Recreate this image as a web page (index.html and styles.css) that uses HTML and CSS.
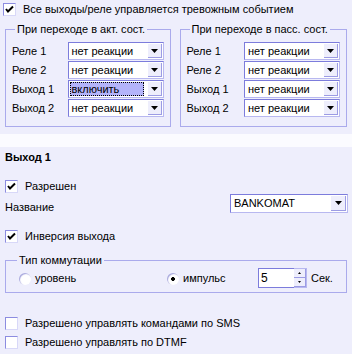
FILE: index.html
```html
<!DOCTYPE html>
<html lang="ru">
<head>
    <meta charset="UTF-8">
    <title>Выход 1</title>
    <link rel="stylesheet" href="styles.css">
</head>
<body>
    <div class="top">
        <div class="check-row first">
            <span class="cb on"></span>Все выходы/реле управляется тревожным событием
        </div>

        <div class="groups">
            <fieldset class="group left">
                <legend>При переходе в акт. сост.</legend>
                <div class="row"><span class="lbl">Реле 1</span><div class="combo"><span class="val">нет реакции</span><span class="btn"></span></div></div>
                <div class="row"><span class="lbl">Реле 2</span><div class="combo"><span class="val">нет реакции</span><span class="btn"></span></div></div>
                <div class="row"><span class="lbl">Выход 1</span><div class="combo"><span class="val focus">включить</span><span class="btn"></span></div></div>
                <div class="row"><span class="lbl">Выход 2</span><div class="combo"><span class="val">нет реакции</span><span class="btn"></span></div></div>
            </fieldset>

            <fieldset class="group right">
                <legend>При переходе в пасс. сост.</legend>
                <div class="row"><span class="lbl">Реле 1</span><div class="combo"><span class="val">нет реакции</span><span class="btn"></span></div></div>
                <div class="row"><span class="lbl">Реле 2</span><div class="combo"><span class="val">нет реакции</span><span class="btn"></span></div></div>
                <div class="row"><span class="lbl">Выход 1</span><div class="combo"><span class="val">нет реакции</span><span class="btn"></span></div></div>
                <div class="row"><span class="lbl">Выход 2</span><div class="combo"><span class="val">нет реакции</span><span class="btn"></span></div></div>
            </fieldset>
        </div>
    </div>

    <div class="divider"></div>

    <div class="details">
        <div class="title">Выход 1</div>

        <div class="check-row allowed"><span class="cb on"></span><span>Разрешен</span></div>

        <div class="name-row">
            <span class="name-label">Название</span>
            <div class="combo wide"><span class="val">BANKOMAT</span><span class="btn"></span></div>
        </div>

        <div class="check-row inverse"><span class="cb on"></span><span>Инверсия выхода</span></div>

        <fieldset class="group switch">
            <legend>Тип коммутации</legend>
            <div class="switch-row">
                <span class="radio-item level"><span class="radio"></span><span>уровень</span></span>
                <span class="radio-item pulse"><span class="radio on"></span><span>импульс</span></span>
                <span class="spin">
                    <span class="spin-val">5</span>
                    <span class="spin-btns"><span class="up"></span><span class="down"></span></span>
                </span>
                <span class="unit">Сек.</span>
            </div>
        </fieldset>

        <div class="check-row sms"><span class="cb"></span><span>Разрешено управлять командами по SMS</span></div>
        <div class="check-row dtmf"><span class="cb"></span><span>Разрешено управлять по DTMF</span></div>
    </div>
</body>
</html>
```

FILE: styles.css
```css
body {
    margin: 0;
    background-color: #eeeefc;
    font-family: 'Liberation Sans', Arial, sans-serif;
    font-size: 11px;
    line-height: 13px;
    font-weight: normal;
    color: #000;
    width: 352px;
    height: 354px;
    overflow: hidden;
}

/* checkboxes */
.check-row {
    display: flex;
    align-items: center;
    height: 13px;
    line-height: 13px;
}

.cb {
    width: 11px;
    height: 11px;
    margin-right: 7px;
    background: #fff;
    border: 1px solid #8c8ce0;
    border-right-color: #d8d8f8;
    border-bottom-color: #d8d8f8;
    flex-shrink: 0;
}

.cb.on {
    background: #fff url("data:image/svg+xml,%3Csvg xmlns='http://www.w3.org/2000/svg' width='11' height='11'%3E%3Cpath d='M2 5 L4 7.5 L9 2.5' fill='none' stroke='black' stroke-width='2'/%3E%3C/svg%3E") no-repeat center;
}

/* top panel */
.top {
    padding: 3px 5px 0 3px;
    height: 131px;
}

.groups {
    display: flex;
    gap: 9px;
    margin-top: 7px;
    padding-left: 2px;
}

.group {
    margin: 0;
    border: 1px solid #aaaaec;
    padding: 6px 6px 8px 6px;
}

.group legend {
    padding: 0 2px;
    margin-left: 3px;
    line-height: 13px;
}

.group.left {
    width: 152px;
}

.group.right {
    width: 154px;
}

.row {
    display: flex;
    align-items: center;
    justify-content: space-between;
    height: 18px;
    margin-bottom: 1px;
}

/* combo boxes */
.combo {
    display: flex;
    width: 94px;
    height: 16px;
    background: #fff;
    border: 1px solid #7c7cdc;
    border-right-color: #b8b8f0;
    border-bottom-color: #b8b8f0;
}

.combo .val {
    flex: 1;
    line-height: 14px;
    padding-left: 2px;
    margin: 1px;
    white-space: nowrap;
}

.combo .val.focus {
    background: #b4b4fa;
    outline: 1px dotted #000;
    outline-offset: -1px;
    margin-right: 3px;
}

.combo .btn {
    width: 14px;
    height: 14px;
    margin: 1px;
    background: #eeeefc url("data:image/svg+xml,%3Csvg xmlns='http://www.w3.org/2000/svg' width='7' height='4'%3E%3Cpath d='M0 0 H7 L3.5 4 Z' fill='black'/%3E%3C/svg%3E") no-repeat center;
    border-right: 1px solid #9c9ce4;
    border-bottom: 1px solid #9c9ce4;
    box-sizing: border-box;
}

/* divider strip */
.divider {
    height: 13px;
    background: #fbfbff;
}

/* details */
.details {
    padding: 0 5px;
}

.title {
    font-weight: bold;
    line-height: 20px;
    height: 20px;
}

.check-row.allowed {
    margin-top: 13px;
}

.name-row {
    display: flex;
    justify-content: space-between;
    align-items: flex-end;
    margin-top: 1px;
    height: 19px;
}

.name-label {
    line-height: 13px;
    position: relative;
    top: 1px;
}

.combo.wide {
    width: 116px;
    height: 17px;
    margin-right: -1px;
}

.combo.wide .val {
    line-height: 15px;
}

.combo.wide .btn {
    height: 15px;
    width: 15px;
}

.check-row.inverse {
    margin-top: 17px;
}

.group.switch {
    box-sizing: border-box;
    width: 342px;
    margin-top: 11px;
    padding: 1px 6px 4px 13px;
}

.group.switch legend {
    margin-left: -2px;
}

.switch-row {
    display: flex;
    align-items: flex-start;
    height: 20px;
}

.radio-item {
    display: flex;
    align-items: center;
    height: 13px;
    margin-top: 4px;
}

.radio-item.level {
    width: 148px;
}

.radio-item.pulse {
    width: 91px;
}

.radio {
    width: 12px;
    height: 12px;
    margin-right: 4px;
    border-radius: 50%;
    background: #fff;
    box-shadow: inset 1px 1px 1px #a4a4dc;
    flex-shrink: 0;
}

.radio.on {
    background: radial-gradient(circle, #000 0 1.6px, #fff 2.2px);
}

.spin {
    display: flex;
    height: 20px;
}

.spin-val {
    width: 33px;
    background: #fff;
    border: 1px solid #7c7cdc;
    border-right: none;
    padding-left: 2px;
    line-height: 18px;
    font-size: 12px;
}

.spin-btns {
    display: flex;
    flex-direction: column;
    width: 13px;
    box-sizing: border-box;
    border: 1px solid #b8b8f0;
    border-left: none;
    background: #fff;
}

.spin-btns span {
    flex: 1;
    background-color: #eeeefc;
    border-right: 1px solid #9c9ce4;
    border-bottom: 1px solid #9c9ce4;
    background-repeat: no-repeat;
    background-position: center;
}

.spin-btns .up {
    background-image: url("data:image/svg+xml,%3Csvg xmlns='http://www.w3.org/2000/svg' width='3' height='2'%3E%3Cpath d='M1.5 0 L3 2 H0 Z' fill='black'/%3E%3C/svg%3E");
}

.spin-btns .down {
    background-image: url("data:image/svg+xml,%3Csvg xmlns='http://www.w3.org/2000/svg' width='3' height='2'%3E%3Cpath d='M0 0 H3 L1.5 2 Z' fill='black'/%3E%3C/svg%3E");
}

.unit {
    margin-left: 4px;
    margin-top: 4px;
}

.check-row.sms {
    margin-top: 24px;
}

.check-row.dtmf {
    margin-top: 6px;
}
```
